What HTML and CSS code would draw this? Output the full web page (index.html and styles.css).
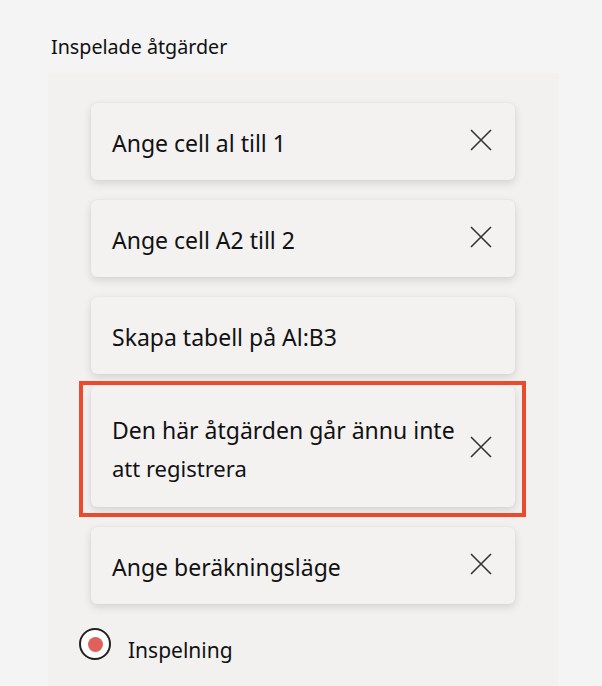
FILE: index.html
```html
<!DOCTYPE html>
<html lang="sv">
<head>
<meta charset="utf-8">
<link rel="stylesheet" href="styles.css">
</head>
<body>
<h1 class="title">Inspelade åtgärder</h1>
<div class="panel">
  <div class="card">
    <span class="label">Ange cell al till 1</span>
    <svg class="close" viewBox="0 0 22 22" width="22" height="22"><path d="M1 1L21 21M21 1L1 21" stroke="#333" stroke-width="1.6" fill="none"/></svg>
  </div>
  <div class="card">
    <span class="label">Ange cell A2 till 2</span>
    <svg class="close" viewBox="0 0 22 22" width="22" height="22"><path d="M1 1L21 21M21 1L1 21" stroke="#333" stroke-width="1.6" fill="none"/></svg>
  </div>
  <div class="card">
    <span class="label">Skapa tabell på Al:B3</span>
  </div>
  <div class="highlight">
    <div class="card card-tall">
      <span class="label label-wrap">Den här åtgärden går ännu inte <span class="second">att registrera</span></span>
      <svg class="close" viewBox="0 0 22 22" width="22" height="22"><path d="M1 1L21 21M21 1L1 21" stroke="#333" stroke-width="1.6" fill="none"/></svg>
    </div>
  </div>
  <div class="card">
    <span class="label">Ange beräkningsläge</span>
    <svg class="close" viewBox="0 0 22 22" width="22" height="22"><path d="M1 1L21 21M21 1L1 21" stroke="#333" stroke-width="1.6" fill="none"/></svg>
  </div>
  <div class="record">
    <span class="rec-icon"><span class="rec-dot"></span></span>
    <span class="rec-label">Inspelning</span>
  </div>
</div>
</body>
</html>
```

FILE: styles.css
```css
html, body {
  margin: 0;
  padding: 0;
  background: #f4f4f4;
  font-family: "Noto Sans", "Open Sans", sans-serif;
  color: #111;
  height: 686px;
  overflow: hidden;
}

.title {
  margin: 0;
  padding: 33px 0 0 51px;
  font-size: 19.7px;
  font-weight: 400;
  line-height: 28px;
  height: 40px;
}

.panel {
  margin-left: 48px;
  width: 510px;
  height: 613px;
  background: #f2f1f0;
  padding: 30px 43px 0 43px;
  box-sizing: border-box;
  display: flex;
  flex-direction: column;
}

.card {
  position: relative;
  background: #f3f2f1;
  border-radius: 6px;
  box-shadow: 0 3px 8px rgba(0, 0, 0, 0.13), 0 0 2px rgba(0, 0, 0, 0.06);
  height: 77px;
  flex: none;
  display: flex;
  align-items: center;
  justify-content: space-between;
  padding: 0 23px 0 21px;
  box-sizing: border-box;
  margin-bottom: 20px;
}

.label {
  font-size: 23px;
  line-height: 30px;
  margin-top: 2px;
}

.close {
  flex: none;
  margin-top: -4px;
}

.highlight {
  position: relative;
  margin-top: -8px;
  margin-bottom: 20px;
}

.highlight::after {
  content: "";
  position: absolute;
  left: -12px;
  right: -11px;
  top: -5px;
  bottom: -10px;
  border: 4px solid #ec4a2c;
  pointer-events: none;
}

.card-tall {
  height: 121px;
  margin-bottom: 0;
}

.label-wrap {
  width: 352px;
  line-height: 38px;
  margin-top: 4px;
}

.second {
  font-size: 22px;
}

.card-tall .close {
  margin-top: 0;
}

.record {
  display: flex;
  align-items: flex-start;
  margin-left: -12px;
  margin-top: 4px;
}

.rec-icon {
  width: 32px;
  height: 32px;
  box-sizing: border-box;
  border: 2px solid #222;
  border-radius: 50%;
  display: flex;
  align-items: center;
  justify-content: center;
  background: #fff;
}

.rec-dot {
  width: 15px;
  height: 15px;
  border-radius: 50%;
  background: #e0605a;
}

.rec-label {
  font-size: 21px;
  line-height: 28px;
  margin-left: 17px;
  margin-top: 8px;
}
```
